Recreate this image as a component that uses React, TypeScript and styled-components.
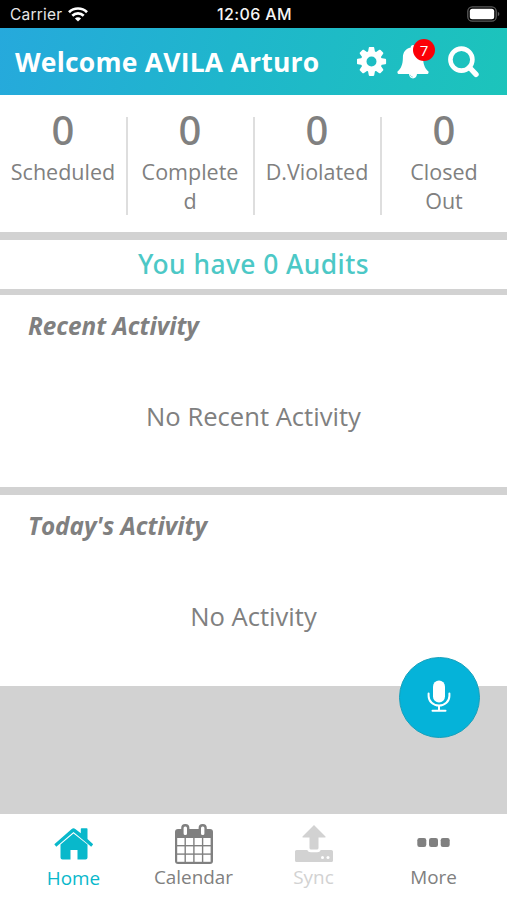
import React from "react";
import styled, { createGlobalStyle } from "styled-components";

const GlobalStyle = createGlobalStyle`
  * { box-sizing: border-box; }
  body { margin: 0; background: #d2d2d2; }
`;

const Screen = styled.div`
  width: 507px;
  height: 900px;
  display: flex;
  flex-direction: column;
  overflow: hidden;
  background: #d2d2d2;
  color: #808080;
  font-family: "Open Sans", "Noto Sans", sans-serif;
`;

const StatusBar = styled.div`
  height: 28px;
  flex: none;
  display: grid;
  grid-template-columns: 1fr auto 1fr;
  align-items: center;
  padding: 0 7px 0 10px;
  background: #000;
  color: #e6e6e6;
  font: 16px/20px Inter, sans-serif;
`;

const Carrier = styled.div`
  display: flex;
  align-items: center;
  gap: 6px;
  padding-top: 1px;
  font-size: 15.5px;
  letter-spacing: 0.2px;
  svg { display: block; }
`;

const Clock = styled.div`
  padding-right: 1px;
  font-weight: 500;
  font-size: 16px;
  letter-spacing: 0.35px;
  color: #f4f4f4;
`;

const Battery = styled.div`
  justify-self: end;
  svg { display: block; }
`;

const Header = styled.header`
  height: 67px;
  flex: none;
  display: flex;
  align-items: center;
  padding: 0 26px 0 15px;
  background: linear-gradient(105deg, #26a9dc 0%, #1fb6cc 45%, #1cc4bb 100%);
  color: #fff;
`;

const Title = styled.h1`
  margin: 0;
  flex: 1;
  font-size: 26.5px;
  letter-spacing: 0.22px;
  line-height: 36px;
  font-weight: 700;
  white-space: nowrap;
`;

const Actions = styled.div`
  display: flex;
  align-items: center;
  gap: 10px;
  svg { display: block; }
`;

const BellWrap = styled.div`
  position: relative;
  width: 40px;
`;

const Badge = styled.span`
  position: absolute;
  top: -5px;
  left: 16px;
  width: 22px;
  height: 22px;
  border-radius: 50%;
  background: #fb0007;
  font-size: 15px;
  line-height: 22px;
  text-align: center;
`;

const Stats = styled.section`
  height: 137px;
  flex: none;
  display: grid;
  grid-template-columns: repeat(4, 127px);
  padding: 22px 0 0 1px;
  background: #fff;
`;

const Stat = styled.div`
  height: 98px;
  padding: 0 10px 0 9px;
  text-align: center;
  border-right: 2px solid #dedede;
  &:last-child { border-right-color: transparent; }
`;

const Count = styled.div`
  margin-top: -14px;
  height: 54px;
  font-family: "Noto Sans", sans-serif;
  font-size: 40px;
  line-height: 54px;
  font-weight: 500;
`;

const StatLabel = styled.div`
  margin: 0 -1px;
  font-size: 21.5px;
  line-height: 29px;
  overflow-wrap: anywhere;
`;

const Audits = styled.section`
  height: 49px;
  flex: none;
  margin: 7.5px 0 6.5px;
  background: #fff;
  color: #4cc8c6;
  font-family: "Noto Sans", sans-serif;
  font-size: 26.4px;
  letter-spacing: 0.45px;
  line-height: 48px;
  font-weight: 500;
  text-align: center;
`;

const Panel = styled.section<{ $height: number }>`
  height: ${(p) => p.$height}px;
  flex: none;
  background: #fff;
  & + & { margin-top: 8px; }
`;

const PanelTitle = styled.h2`
  margin: 0;
  padding: 14px 28px 0;
  font-size: 24.3px;
  line-height: 34px;
  font-weight: 700;
  font-style: italic;
`;

const Empty = styled.p`
  margin: 56px 0 0;
  font-size: 25.6px;
  line-height: 36px;
  text-align: center;
`;

const Filler = styled.div`
  flex: 1;
  position: relative;
`;

const MicButton = styled.button`
  position: absolute;
  top: -29px;
  right: 27px;
  width: 81px;
  height: 81px;
  padding: 0 2px 3px 0;
  display: grid;
  place-items: center;
  border: 1px solid #16a0bb;
  border-radius: 50%;
  background: #05b3d9;
`;

const Nav = styled.nav`
  height: 86px;
  flex: none;
  display: grid;
  grid-template-columns: repeat(4, 120px);
  justify-content: center;
  background: #fff;
`;

const NavItem = styled.a<{ $color: string; $drop?: number }>`
  display: flex;
  flex-direction: column;
  align-items: center;
  color: ${(p) => p.$color};
  svg { display: block; flex: none; height: 50px; }
  span {
    margin-top: ${(p) => p.$drop ?? 0}px;
    font-size: 18.9px;
    line-height: 27px;
  }
`;

const teeth = [0, 45, 90, 135, 180, 225, 270, 315];

const Gear = () => (
  <svg width="30" height="30" viewBox="-14.5 -14.5 30 30" fill="#fff">
    {teeth.map((a) => (
      <path key={a} transform={`rotate(${a})`} d="M-3.6-9 L-2.7-13.8 Q-2.5-14.6-1.7-14.6 H1.7 Q2.5-14.6 2.7-13.8 L3.6-9Z" />
    ))}
    <circle r="7.8" fill="none" stroke="#fff" strokeWidth="5.6" />
  </svg>
);

const Bell = () => (
  <svg width="32" height="35" viewBox="0 0 32 35" fill="#fff">
    <path d="M16 1c1.4 0 2.3.9 2.3 2.4 5 1 7.800 5 7.800 9.800 0 8 2.200 11.600 5.400 14.200.4 1.700-.5 2.600-1.800 2.600H20c-.2 2.600-1.800 4.400-4 4.400s-3.800-1.800-4-4.400H2.300c-1.300 0-2.200-.9-1.800-2.600C3.700 24.800 5.900 21.200 5.900 13.200c0-4.800 2.800-8.800 7.800-9.800C13.700 1.900 14.600 1 16 1Z" />
    <path d="M13.300 30.800c.1 1.300 1.200 2.100 2.500 2.200" fill="none" stroke="#1fbcc5" strokeWidth=".5" />
  </svg>
);

const Search = () => (
  <svg width="34" height="34" viewBox="0 0 34 34" fill="none" stroke="#fff">
    <circle cx="14.400" cy="14.600" r="11" strokeWidth="4.600" />
    <path d="M22.500 22.500 L29 29.300" strokeWidth="5.400" strokeLinecap="round" />
  </svg>
);

const HomeIcon = () => (
  <svg width="40" height="50" viewBox="0 0 40 50" fill="currentColor">
    <path d="M19.500 19.500 33.500 30.500v13q0 2-2 2H23.500v-9.500h-7v9.500H8.500q-2 0-2-2V30.500Z" />
    <path d="M.3 30.200 17.700 14.900q1.800-1.500 3.600 0L26.800 19.300V15q0-.8.8-.8H32.700q.8 0 .8.8v9.900l5.700 5.300-2 2.500L19.500 18 2.300 32.700Z" />
  </svg>
);

const CalendarIcon = () => (
  <svg width="40" height="50" viewBox="0 0 40 50">
    <path d="M4 15h32q3 0 3 3V47q0 3-3 3H4q-3 0-3-3V18q0-3 3-3Z" fill="currentColor" />
    <g fill="#fff">
      {[24, 32.400, 40.800].map((y) =>
        [3.200, 11.900, 20.600, 29.300].map((x) => <rect key={`${x}-${y}`} x={x} y={y} width="7.300" height="7" />)
      )}
    </g>
    {[11.300, 28.700].map((x) => (
      <rect key={x} x={x - 2.900} y="11.300" width="5.800" height="11" rx="2.700" fill="#fff" stroke="currentColor" strokeWidth="2.400" />
    ))}
  </svg>
);

const SyncIcon = () => (
  <svg width="40" height="50" viewBox="0 0 40 50" fill="currentColor">
    <path d="M20 11 31.500 22.600q.7 1-.6 1H24.500V34q0 1.600-1.600 1.600h-5.800q-1.600 0-1.600-1.600V23.600H9.100q-1.300 0-.6-1Z" />
    <path d="M2.600 36h10.600q1 2.300 3.500 2.300h6.600q2.500 0 3.500-2.300h10.600q1.600 0 1.600 1.600v8.800q0 1.600-1.600 1.600H2.600Q1 48 1 46.400v-8.800Q1 36 2.600 36Z" />
    <circle cx="28.500" cy="43.500" r="1.500" fill="#fff" />
    <circle cx="34" cy="43.500" r="1.500" fill="#fff" />
  </svg>
);

const MoreIcon = () => (
  <svg width="40" height="50" viewBox="0 0 40 50" fill="currentColor">
    {[3.300, 15, 26.700].map((x) => (
      <rect key={x} x={x} y="24" width="9" height="9" rx="2.200" />
    ))}
  </svg>
);

const MicIcon = () => (
  <svg width="24" height="34" viewBox="0 0 24 34" fill="none" stroke="#fff" strokeWidth="2" strokeLinecap="round">
    <rect x="6" y="1.500" width="12" height="22" rx="6" fill="#fff" stroke="none" />
    <path d="M1.600 14.500v2.500a10.400 9.600 0 0 0 20.800 0v-2.500M12 26.600v5M5.500 31.800h13" />
  </svg>
);

const Wifi = () => (
  <svg width="20" height="15" viewBox="0 0 20 15" fill="none" stroke="#fff" strokeWidth="2.700">
    <path d="M1 5.200a12.800 12.800 0 0 1 18 0M4.300 8.700a8.200 8.200 0 0 1 11.400 0" />
    <path d="M10 14.500 6.900 11.500a4.400 4.400 0 0 1 6.200 0Z" fill="#fff" stroke="none" />
  </svg>
);

const BatteryIcon = () => (
  <svg width="33" height="16" viewBox="0 0 33 16">
    <rect x=".8" y=".8" width="28.400" height="14.400" rx="4.500" fill="none" stroke="#5b5b5b" strokeWidth="1.300" />
    <rect x="2.800" y="2.800" width="24.400" height="10.400" rx="2.500" fill="#fff" />
    <path d="M30.800 5.800q1.600.7 1.600 2.200t-1.600 2.200Z" fill="#5b5b5b" />
  </svg>
);

const stats = ["Scheduled", "Completed", "D.Violated", "Closed Out"];

export default function App() {
  return (
    <Screen>
      <GlobalStyle />
      <StatusBar>
        <Carrier>Carrier <Wifi /></Carrier>
        <Clock>12:06 AM</Clock>
        <Battery><BatteryIcon /></Battery>
      </StatusBar>
      <Header>
        <Title>Welcome AVILA Arturo</Title>
        <Actions>
          <Gear />
          <BellWrap><Bell /><Badge>7</Badge></BellWrap>
          <Search />
        </Actions>
      </Header>
      <Stats>
        {stats.map((label) => (
          <Stat key={label}>
            <Count>0</Count>
            <StatLabel>{label}</StatLabel>
          </Stat>
        ))}
      </Stats>
      <Audits>You have 0 Audits</Audits>
      <Panel $height={192}>
        <PanelTitle>Recent Activity</PanelTitle>
        <Empty>No Recent Activity</Empty>
      </Panel>
      <Panel $height={191}>
        <PanelTitle>Today's Activity</PanelTitle>
        <Empty>No Activity</Empty>
      </Panel>
      <Filler>
        <MicButton aria-label="Voice input"><MicIcon /></MicButton>
      </Filler>
      <Nav>
        <NavItem $color="#08b8cb" $drop={1}><HomeIcon /><span>Home</span></NavItem>
        <NavItem $color="#808080"><CalendarIcon /><span>Calendar</span></NavItem>
        <NavItem $color="#d2d2d2"><SyncIcon /><span>Sync</span></NavItem>
        <NavItem $color="#808080"><MoreIcon /><span>More</span></NavItem>
      </Nav>
    </Screen>
  );
}
